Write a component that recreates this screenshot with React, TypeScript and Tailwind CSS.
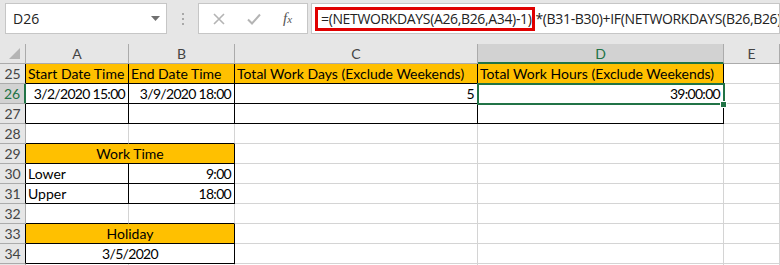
import React from 'react';

const cellFont = { fontFamily: 'Lato, "Liberation Sans", sans-serif' };
const uiFont = { fontFamily: '"Open Sans", "Noto Sans", sans-serif' };

type Cell = {
  w: string;
  text?: string;
  align?: 'left' | 'right' | 'center';
  fill?: boolean;
  num?: boolean;
  r?: boolean; // black right border
  b?: boolean; // black bottom border
};

const W = {
  A: 'w-[103px]',
  B: 'w-[106px]',
  AB: 'w-[209px]',
  C: 'w-[243px]',
  D: 'w-[246px]',
};

const blank = (w: string, r = false, b = false): Cell => ({ w, r, b });

const rows: { n: number; table?: boolean; sel?: boolean; cells: Cell[] }[] = [
  {
    n: 25,
    table: true,
    cells: [
      { w: W.A, text: 'Start Date Time', fill: true, r: true, b: true },
      { w: W.B, text: 'End Date Time', fill: true, r: true, b: true },
      { w: W.C, text: 'Total Work Days (Exclude Weekends)', fill: true, r: true, b: true },
      { w: W.D, text: 'Total Work Hours (Exclude Weekends)', fill: true, r: true, b: true },
    ],
  },
  {
    n: 26,
    table: true,
    sel: true,
    cells: [
      { w: W.A, text: '3/2/2020 15:00', align: 'right', num: true, r: true, b: true },
      { w: W.B, text: '3/9/2020 18:00', align: 'right', num: true, r: true, b: true },
      { w: W.C, text: '5', align: 'right', num: true, r: true, b: true },
      { w: W.D, text: '39:00:00', align: 'right', num: true, r: true, b: true },
    ],
  },
  { n: 27, table: true, cells: [blank(W.A, true, true), blank(W.B, true, true), blank(W.C, true, true), blank(W.D, true, true)] },
  { n: 28, cells: [blank(W.A, false, true), blank(W.B, false, true), blank(W.C), blank(W.D)] },
  {
    n: 29,
    table: true,
    cells: [{ w: W.AB, text: 'Work Time', align: 'center', fill: true, r: true, b: true }, blank(W.C), blank(W.D)],
  },
  {
    n: 30,
    table: true,
    cells: [
      { w: W.A, text: 'Lower', r: true, b: true },
      { w: W.B, text: '9:00', align: 'right', num: true, r: true, b: true },
      blank(W.C),
      blank(W.D),
    ],
  },
  {
    n: 31,
    table: true,
    cells: [
      { w: W.A, text: 'Upper', r: true, b: true },
      { w: W.B, text: '18:00', align: 'right', num: true, r: true, b: true },
      blank(W.C),
      blank(W.D),
    ],
  },
  { n: 32, cells: [blank(W.A, false, true), blank(W.B, false, true), blank(W.C), blank(W.D)] },
  {
    n: 33,
    table: true,
    cells: [{ w: W.AB, text: 'Holiday', align: 'center', fill: true, r: true, b: true }, blank(W.C), blank(W.D)],
  },
  {
    n: 34,
    table: true,
    cells: [{ w: W.AB, text: '3/5/2020', align: 'center', num: true, r: true, b: true }, blank(W.C), blank(W.D)],
  },
  { n: 35, cells: [blank(W.A), blank(W.B), blank(W.C), blank(W.D)] },
];

function SheetCell({ cell }: { cell: Cell }) {
  const align =
    cell.align === 'right' ? 'justify-end pr-[3px]' : cell.align === 'center' ? 'justify-center' : 'justify-start pl-[2px]';
  return (
    <div
      className={`${cell.w} h-full shrink-0 flex items-end border-r border-b text-[14px] leading-[19px] text-black whitespace-nowrap overflow-hidden ${align} ${
        cell.num ? 'tracking-[-0.7px]' : ''
      } ${cell.fill ? 'bg-[#ffc000]' : 'bg-white'} ${cell.r ? 'border-r-black' : 'border-r-[#d4d4d4]'} ${
        cell.b ? 'border-b-black' : 'border-b-[#d4d4d4]'
      }`}
      style={cellFont}
    >
      {cell.text}
    </div>
  );
}

function FormulaBar() {
  return (
    <div className="h-[44px] bg-[#e6e6e6] flex items-start pt-[3px] pl-[5px]">
      <div className="w-[162px] h-[31px] bg-white border border-[#c6c6c6] flex items-center justify-between pl-[7px] pr-[6px]">
        <span className="text-[14px] text-[#222]" style={uiFont}>
          D26
        </span>
        <svg width="9" height="6" viewBox="0 0 9 6">
          <path d="M0 0 L9 0 L4.5 5 Z" fill="#707070" />
        </svg>
      </div>
      <div className="w-[31px] h-[31px] flex flex-col items-center justify-center gap-[3px]">
        <span className="w-[2px] h-[2px] bg-[#a8a8a8]" />
        <span className="w-[2px] h-[2px] bg-[#a8a8a8]" />
        <span className="w-[2px] h-[2px] bg-[#a8a8a8]" />
      </div>
      <div className="w-[110px] h-[31px] bg-white border border-[#c6c6c6] flex items-center pl-[14px] gap-[22px]">
        <svg width="12" height="12" viewBox="0 0 12 12">
          <path d="M1 1 L11 11 M11 1 L1 11" stroke="#b4b4b4" strokeWidth="1.6" fill="none" />
        </svg>
        <svg width="14" height="12" viewBox="0 0 14 12">
          <path d="M1 6.5 L5 10.5 L13 1.5" stroke="#b4b4b4" strokeWidth="2" fill="none" />
        </svg>
        <span className="text-[15px] italic text-[#555] leading-none" style={{ fontFamily: '"Liberation Serif", serif' }}>
          f<span className="text-[11px]">x</span>
        </span>
      </div>
      <div className="flex-1 ml-[3px] h-[31px] bg-white border border-[#c6c6c6] flex items-center pl-[3px] overflow-hidden">
        <div className="text-[14px] tracking-[-0.35px] text-[#222] whitespace-nowrap flex items-center" style={uiFont}>
          <span className="border-[3px] border-[#e00000] h-[24px] flex items-center pl-[3px] pr-[1px]">
            =(NETWORKDAYS(A26,B26,A34)-1)
          </span>
          <span>*(B31-B30)+IF(NETWORKDAYS(B26,B26),</span>
        </div>
      </div>
    </div>
  );
}

function ColumnHeaders() {
  const hdr = 'h-full shrink-0 flex items-center justify-center border-r border-r-[#ababab] border-b text-[14px]';
  return (
    <div className="h-[20px] flex bg-[#e6e6e6]" style={cellFont}>
      <div className="w-[26px] h-full shrink-0 border-r border-r-[#ababab] border-b border-b-[#ababab] relative">
        <svg className="absolute right-[5px] bottom-[4px]" width="11" height="11" viewBox="0 0 11 11">
          <path d="M11 0 L11 11 L0 11 Z" fill="#b4b4b4" />
        </svg>
      </div>
      <div className={`${hdr} w-[103px] border-b-[#ababab] text-[#444]`}>A</div>
      <div className={`${hdr} w-[106px] border-b-[#ababab] text-[#444]`}>B</div>
      <div className={`${hdr} w-[243px] border-b-[#ababab] text-[#444]`}>C</div>
      <div className={`${hdr} w-[246px] bg-[#d2d2d2] border-b-2 border-b-[#217346] text-[#217346]`}>D</div>
      <div className={`${hdr} flex-1 border-b-[#ababab] text-[#444]`}>E</div>
    </div>
  );
}

export default function App() {
  return (
    <div className="w-[780px] h-[265px] overflow-hidden bg-white">
      <FormulaBar />
      <div className="relative">
        <ColumnHeaders />
        {rows.map((row) => (
          <div key={row.n} className="h-[20px] flex">
            <div
              className={`w-[26px] h-full shrink-0 flex items-center justify-center border-b border-b-[#ababab] text-[14px] ${
                row.sel
                  ? 'bg-[#d2d2d2] text-[#217346] border-r-2 border-r-[#217346]'
                  : `bg-[#e6e6e6] text-[#444] border-r ${row.table ? 'border-r-black' : 'border-r-[#ababab]'}`
              }`}
              style={cellFont}
            >
              {row.n}
            </div>
            {row.cells.map((c, i) => (
              <SheetCell key={i} cell={c} />
            ))}
            <div className="flex-1 h-full border-b border-r border-[#d4d4d4]" />
          </div>
        ))}
        {/* active cell D26 */}
        <div className="absolute left-[477px] top-[39px] w-[248px] h-[22px] border-2 border-[#217346] pointer-events-none" />
        <div className="absolute left-[720px] top-[57px] w-[7px] h-[7px] bg-[#217346] border border-white pointer-events-none" />
      </div>
    </div>
  );
}
